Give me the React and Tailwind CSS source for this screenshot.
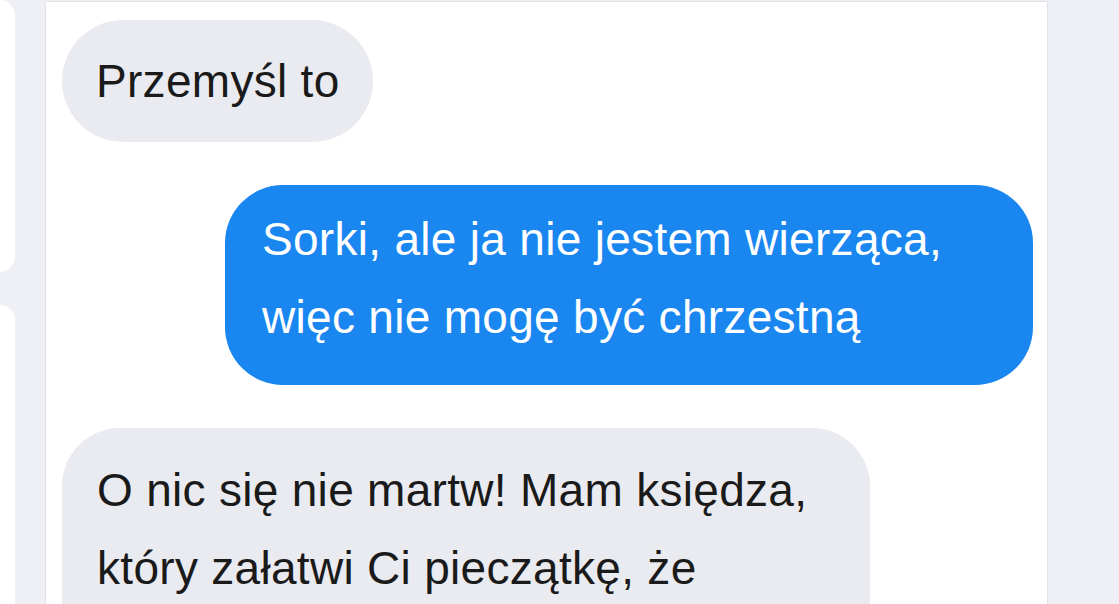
// App.jsx

function Bubble({ mine, className, children }) {
  return (
    <div
      className={
        (mine ? "bg-[#1a86f0] text-white " : "bg-[#e9ebf0] text-[#1a1a1a] ") +
        "shrink-0 text-[46px] leading-[78px] tracking-[0.3px] " +
        className
      }
    >
      {children}
    </div>
  );
}

export default function App() {
  return (
    <div
      className="h-[604px] w-[1119px] overflow-hidden bg-[#eff0f5] flex"
      style={{ fontFamily: '"Liberation Sans", Arial, sans-serif' }}
    >
      {/* left cards peeking in */}
      <div className="w-[15px] flex flex-col gap-[33px]">
        <div className="h-[272px] shrink-0 bg-white rounded-r-[15px]" />
        <div className="flex-1 bg-white rounded-tr-[15px]" />
      </div>

      <div className="w-[31px]" />

      {/* conversation panel */}
      <div className="mt-[2px] w-[1001px] bg-white shadow-[0_0_2px_rgba(0,0,0,0.18)] flex flex-col pl-[16px] pr-[14px] pt-[18px] gap-[43px]">
        <Bubble className="self-start w-[311px] h-[122px] rounded-full pl-[34px] flex items-center">
          Przemyśl to
        </Bubble>

        <Bubble mine className="self-end w-[808px] h-[200px] rounded-[58px] pl-[37px] pt-[15px]">
          <span className="block">Sorki, ale ja nie jestem wierząca,</span>
          <span className="block">więc nie mogę być chrzestną</span>
        </Bubble>

        <Bubble className="self-start w-[808px] h-[240px] rounded-[58px] pl-[35px] pt-[23px]">
          <span className="block">O nic się nie martw! Mam księdza,</span>
          <span className="block">który załatwi Ci pieczątkę, że</span>
        </Bubble>
      </div>
    </div>
  );
}
